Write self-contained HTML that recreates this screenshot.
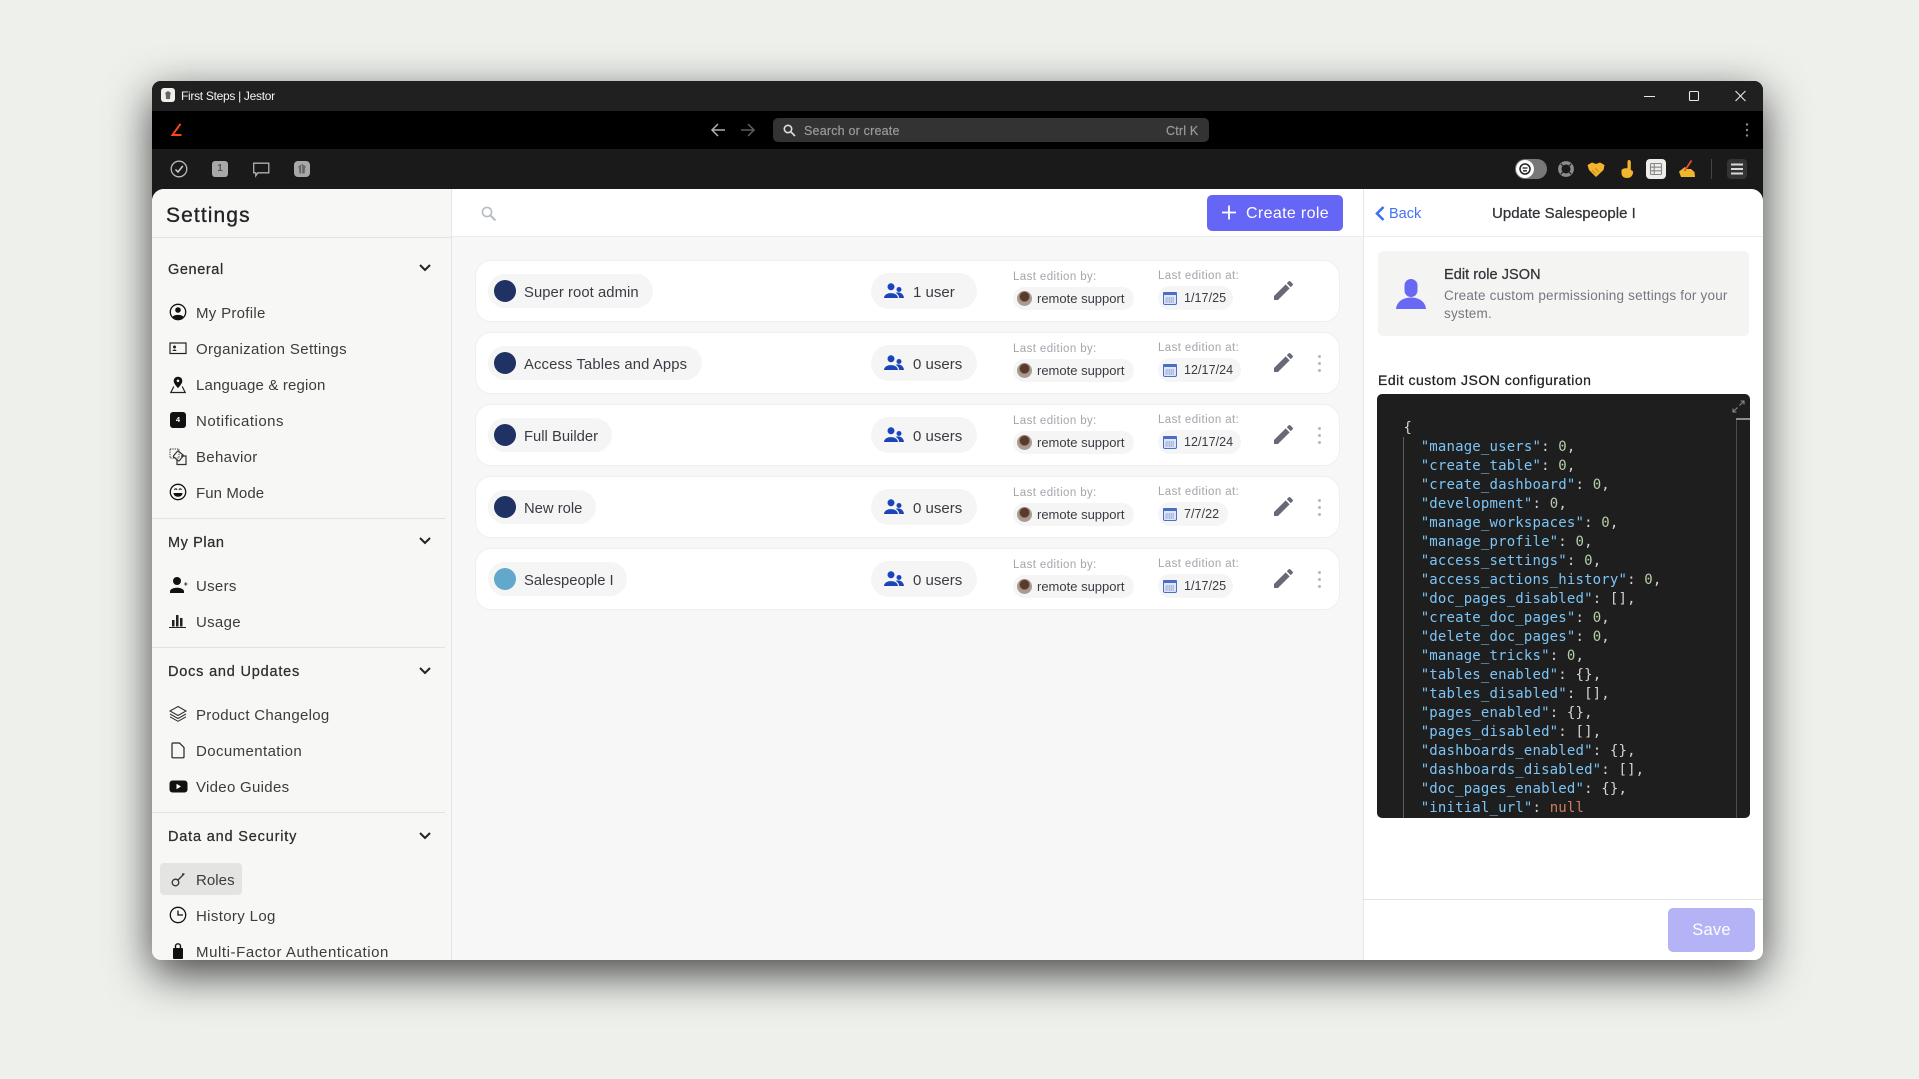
<!DOCTYPE html>
<html lang="en"><head><meta charset="utf-8"><title>First Steps | Jestor</title>
<style>
*{box-sizing:border-box}
html,body{margin:0;padding:0}
body{width:1919px;height:1079px;background:#eef0ec;overflow:hidden;position:relative;font-family:"Liberation Sans",Arial,sans-serif}
#win{position:absolute;left:152px;top:81px;width:1611px;height:879px;border-radius:9px;box-shadow:0 14px 44px rgba(0,0,0,.72);overflow:hidden;background:#1a1a1a}
#in{position:absolute;left:-152px;top:-81px;width:1919px;height:1079px}
.a{position:absolute}
.t{position:absolute;white-space:nowrap}
svg{position:absolute;overflow:visible}
.side{font-size:15px;letter-spacing:.3px;color:#3c3c3e;line-height:20px}
.head{font-size:14.5px;letter-spacing:.6px;color:#2e2e30;line-height:20px;-webkit-text-stroke:.25px #2e2e30}
.hr{position:absolute;left:152px;width:293px;height:1px;background:#e2e2e0}
.card{position:absolute;left:475px;width:865px;height:62px;background:#fff;border:1px solid #efefef;border-radius:16px}
.pill{position:absolute;background:#f5f5f6;border-radius:18px}
.nm{position:absolute;left:12px;top:13px;height:34px}
.dot{position:absolute;left:6px;top:6px;width:22px;height:22px;border-radius:50%;background:#1f3263}
.nt{position:absolute;left:36px;top:9px;font-size:14.8px;line-height:20px;color:#3b3b42;white-space:nowrap}
.up{left:395px;top:12px;width:106px;height:36px}
.ut{position:absolute;left:42px;top:10px;font-size:15px;line-height:20px;color:#3b3b42;white-space:nowrap}
.l1,.l2{position:absolute;font-size:11.5px;letter-spacing:.4px;color:#a4a4ac;line-height:14px;white-space:nowrap}
.l1{left:537px;top:9px}
.l2{left:682px;top:8px}
.bp{left:537px;top:26px;width:121px;height:23px}
.av{position:absolute;left:4px;top:4px;width:15px;height:15px;border-radius:50%;background:radial-gradient(circle at 50% 38%,#5b3a2c 0 36%,#a89b90 46% 100%)}
.bt{position:absolute;left:24px;top:3px;font-size:13px;line-height:17px;color:#3b3b42;white-space:nowrap}
.dp{left:682px;top:25px;height:24px}
.dt{position:absolute;left:26px;top:4px;font-size:12.5px;letter-spacing:.06px;line-height:17px;color:#3b3b42;white-space:nowrap}
.ds{position:absolute;left:842px;width:3px;height:3px;border-radius:50%;background:#b8b8b8}
#code{position:absolute;left:1403.5px;top:419px;font:14px/19px "DejaVu Sans Mono","Liberation Mono",monospace;letter-spacing:.17px;white-space:pre;color:#d4d4d4}
#code b{font-weight:400;color:#7cc4f5}
#code i{font-style:normal;color:#b5cea8}
#code u{text-decoration:none;color:#ce7f62}
</style></head>
<body>
<div id="win"><div id="in">
<!-- title bar -->
<div class="a" style="left:152px;top:81px;width:1611px;height:30px;background:#202020"></div>
<div class="a" style="left:161px;top:88px;width:14px;height:14px;border-radius:3px;background:#efefec"></div>
<svg style="left:161px;top:88px" width="14" height="14"><path d="M7 3 10 5 9.300 6.200 9 11H5L4.700 6.200 4 5Z" fill="#666"/></svg>
<div class="t" style="left:181px;top:88px;font-size:12px;letter-spacing:-.3px;line-height:16px;color:#f2f2f2">First Steps | Jestor</div>
<svg style="left:1640px;top:86px" width="115" height="20" fill="none" stroke="#e8e8e8" stroke-width="1.1"><path d="M4 10.5H15"/><rect x="49.5" y="5.5" width="9" height="9" rx="1"/><path d="M95.5 5 105.500 15M105.500 5 95.500 15"/></svg>
<!-- black bar -->
<div class="a" style="left:152px;top:111px;width:1611px;height:38px;background:#000"></div>
<svg style="left:171px;top:123px" width="11" height="14" fill="none" stroke="#f4481b" stroke-width="2"><path d="M9.500 .8 1.500 12H10.500"/></svg>
<svg style="left:710px;top:122px" width="48" height="16" fill="none" stroke-width="1.5"><path d="M15 8H2M8 2 2 8 8 14" stroke="#b0b0b0"/><path d="M31 8H44M38 2 44 8 38 14" stroke="#5e5e5e"/></svg>
<div class="a" style="left:773px;top:118px;width:436px;height:24px;background:#333;border-radius:5px"></div>
<svg style="left:783px;top:124px" width="13" height="13" fill="none" stroke="#ddd" stroke-width="1.600"><circle cx="5" cy="5" r="3.700"/><path d="M8 8 12 12"/></svg>
<div class="t" style="left:804px;top:123px;font-size:12.5px;letter-spacing:.2px;line-height:16px;color:#9a9a9a;-webkit-text-stroke:.2px #9a9a9a">Search or create</div>
<div class="t" style="left:1166px;top:123px;font-size:12.5px;letter-spacing:.2px;line-height:16px;color:#9a9a9a;-webkit-text-stroke:.2px #9a9a9a">Ctrl K</div>
<svg style="left:1745px;top:122px" width="4" height="16" fill="#8a8a8a"><circle cx="2" cy="2.500" r="1.200"/><circle cx="2" cy="8" r="1.200"/><circle cx="2" cy="13.500" r="1.200"/></svg>
<!-- toolbar -->
<svg style="left:170px;top:160px" width="18" height="18" fill="none" stroke="#b8b8b8" stroke-width="1.300"><circle cx="9" cy="9" r="7.800"/><path d="M5.500 9.500 8 12 12.800 6" stroke-width="1.500" stroke="#d0d0d0"/></svg>
<div class="a" style="left:212px;top:161px;width:16px;height:16px;border-radius:3px;background:#a8a8a8;color:#555;font-size:10px;font-weight:700;line-height:16px;text-align:center">1</div>
<svg style="left:253px;top:162px" width="17" height="16" fill="none" stroke="#b0b0b0" stroke-width="1.300"><path d="M.700 1.200H15.800V10.800H5L2.800 13.800V10.800H.700Z"/></svg>
<div class="a" style="left:294px;top:161px;width:16px;height:16px;border-radius:4px;background:#a8a8a8"></div>
<svg style="left:294px;top:161px" width="16" height="16"><path d="M8 3 12 5.600 11 7 10.600 12.500H5.400L5 7 4 5.600Z" fill="#666"/><path d="M7.700 4V12.500" stroke="#a8a8a8"/></svg>
<!-- right toolbar -->
<div class="a" style="left:1515px;top:159px;width:32px;height:20px;border-radius:10px;background:#787878"></div>
<div class="a" style="left:1516px;top:160px;width:18px;height:18px;border-radius:50%;background:#fff"></div>
<svg style="left:1515px;top:159px" width="20" height="20" fill="none" stroke="#222"><circle cx="10" cy="10" r="5" stroke-width="1.500"/><path d="M7.500 9H12.500M8 11.800H12" stroke-width="1.300"/></svg>
<svg style="left:1557px;top:160px" width="18" height="18" fill="none" stroke="#8c8c8c"><circle cx="9" cy="9" r="6.200" stroke-width="3.400"/><path d="M3.800 3.800 6.500 6.500M14.200 3.800 11.500 6.500M3.800 14.200 6.500 11.500M14.200 14.200 11.500 11.500" stroke="#1a1a1a" stroke-width="1.100"/></svg>
<svg style="left:1587px;top:161px" width="18" height="17"><path d="M.500 4 5 1.500 9 3 13 1.500 17.500 4 16.500 9 9 16 2 9Z" fill="#f3b52c"/><path d="M5 9 9 13M8 7 12 11" stroke="#c98d12"/></svg>
<svg style="left:1620px;top:159px" width="14" height="20"><path d="M9 1C10 1 10.800 1.800 10.800 3V11C12.500 11.500 13.500 12.500 13 14 12.500 17 10.500 19 7 19 3.500 19 1.500 17 1.500 14V11.500C1.500 10 4 9 7.500 9.300V3C7.500 1.800 8 1 9 1Z" fill="#f3b52c"/></svg>
<div class="a" style="left:1646px;top:159px;width:20px;height:20px;border-radius:4px;background:#ededeb"></div>
<svg style="left:1646px;top:159px" width="20" height="20" fill="none" stroke="#888" stroke-width="1.100"><rect x="4.500" y="4.500" width="11" height="11" rx="1"/><path d="M4.500 8.200H15.500M4.500 11.800H15.500M8.200 4.500V15.500"/></svg>
<svg style="left:1678px;top:159px" width="19" height="20"><path d="M1 12.500 7 8 9 10 13 10 16.500 13 17 18H3Z" fill="#f3b52c"/><path d="M6.500 12 13.500 1.500" stroke="#e0523a" stroke-width="1.800"/></svg>
<div class="a" style="left:1711px;top:159px;width:1px;height:20px;background:#454545"></div>
<div class="a" style="left:1727px;top:159px;width:20px;height:20px;border-radius:4px;background:#343434"></div>
<svg style="left:1727px;top:159px" width="20" height="20" stroke="#d8d8d8" stroke-width="2"><path d="M4 5.500H16M4 10H16M4 14.500H16"/></svg>

<!-- content -->
<div class="a" style="left:152px;top:189px;width:1611px;height:771px;border-radius:12px 12px 0 0;background:#f7f7f7;overflow:hidden">
<div class="a" style="left:-152px;top:-189px;width:1919px;height:1079px">
<!-- sidebar -->
<div class="a" style="left:152px;top:189px;width:300px;height:771px;background:#f7f7f5;border-right:1px solid #e4e4e2"></div>
<div class="a" style="left:152px;top:237px;width:299px;height:1px;background:#e2e2e0"></div>
<div class="t" style="left:166px;top:203px;font-size:21px;letter-spacing:1.1px;line-height:26px;color:#232325;-webkit-text-stroke:.35px #232325">Settings</div>

<div class="t head" style="left:168px;top:260px">General</div>
<div class="t head" style="left:168px;top:533px">My Plan</div>
<div class="t head" style="left:168px;top:662px;letter-spacing:.8px">Docs and Updates</div>
<div class="t head" style="left:168px;top:827px;letter-spacing:.82px">Data and Security</div>
<svg style="left:419px;top:264px" width="12" height="8" fill="none" stroke="#222" stroke-width="2"><path d="M1 1 6 6 11 1"/></svg>
<svg style="left:419px;top:537px" width="12" height="8" fill="none" stroke="#222" stroke-width="2"><path d="M1 1 6 6 11 1"/></svg>
<svg style="left:419px;top:667px" width="12" height="8" fill="none" stroke="#222" stroke-width="2"><path d="M1 1 6 6 11 1"/></svg>
<svg style="left:419px;top:832px" width="12" height="8" fill="none" stroke="#222" stroke-width="2"><path d="M1 1 6 6 11 1"/></svg>
<div class="hr" style="top:518px"></div><div class="hr" style="top:647px"></div><div class="hr" style="top:812px"></div>
<div class="a" style="left:160px;top:863px;width:82px;height:32px;border-radius:4px;background:#e4e4e2"></div>

<div class="t side" style="left:196px;top:304px">My Profile</div>
<div class="t side" style="left:196px;top:340px;letter-spacing:.36px">Organization Settings</div>
<div class="t side" style="left:196px;top:376px;letter-spacing:.16px">Language &amp; region</div>
<div class="t side" style="left:196px;top:412px;letter-spacing:.48px">Notifications</div>
<div class="t side" style="left:196px;top:448px">Behavior</div>
<div class="t side" style="left:196px;top:484px;letter-spacing:.08px">Fun Mode</div>
<div class="t side" style="left:196px;top:576.5px">Users</div>
<div class="t side" style="left:196px;top:612.5px">Usage</div>
<div class="t side" style="left:196px;top:705.5px">Product Changelog</div>
<div class="t side" style="left:196px;top:742px;letter-spacing:.4px">Documentation</div>
<div class="t side" style="left:196px;top:778px">Video Guides</div>
<div class="t side" style="left:196px;top:870.5px;letter-spacing:.06px">Roles</div>
<div class="t side" style="left:196px;top:907px;letter-spacing:.35px">History Log</div>
<div class="t side" style="left:196px;top:943px;letter-spacing:.57px">Multi-Factor Authentication</div>

<svg style="left:169px;top:303px" width="18" height="18"><circle cx="9" cy="9" r="7.700" fill="none" stroke="#111" stroke-width="1.300"/><circle cx="9" cy="7" r="2.800" fill="#111"/><path d="M3.500 14C5 11.200 13 11.200 14.500 14 12 17.200 6 17.200 3.500 14Z" fill="#111"/></svg>
<svg style="left:169px;top:342px" width="18" height="13"><rect x="1" y="1" width="16" height="10.500" fill="none" stroke="#222" stroke-width="1.200"/><circle cx="5.500" cy="5" r="1.500" fill="#222"/><path d="M3.500 9C3.500 7 7.500 7 7.500 9Z" fill="#222"/></svg>
<svg style="left:170px;top:376px" width="16" height="18"><path d="M8 .8C5.300.8 3.700 2.800 3.700 5 3.700 8 8 12 8 12S12.300 8 12.300 5C12.300 2.800 10.700.8 8 .8Z" fill="#111"/><circle cx="8" cy="4.800" r="1.300" fill="#f7f7f5"/><path d="M3.800 10.500 .8 16.500H15.200L12.200 10.500" fill="none" stroke="#222" stroke-width="1.200"/></svg>
<div class="a" style="left:170px;top:412px;width:16px;height:16px;border-radius:3px;background:#111;color:#fff;font-size:7.500px;font-weight:700;line-height:16px;text-align:center">4</div>
<svg style="left:169px;top:448px" width="18" height="18" fill="none" stroke="#333" stroke-width="1"><rect x="1" y="1" width="9" height="9" stroke-dasharray="1.300 1"/><rect x="5.500" y="4" width="7.500" height="7.500" rx="1" transform="rotate(40 9 8)" stroke-width="1.200"/><path d="M12 8H17V16.500H8V12" stroke-width="1.200"/></svg>
<svg style="left:169px;top:483px" width="18" height="18"><circle cx="9" cy="9" r="7.700" fill="none" stroke="#111" stroke-width="1.300"/><path d="M4.500 10H13.500C13.500 15 4.500 15 4.500 10Z" fill="#111"/><path d="M5.500 6.800C6 5.500 7.500 5.500 8 6.800M10 6.800C10.500 5.500 12 5.500 12.500 6.800" stroke="#111" fill="none" stroke-width="1.200"/></svg>
<svg style="left:169px;top:576px" width="19" height="18" fill="#111"><circle cx="8" cy="5" r="4"/><path d="M1 15.500C1 10.500 15 10.500 15 15.500V17H1Z"/><path d="M15 8H18.500M16.800 6.300V9.700" stroke="#111" stroke-width=".8"/></svg>
<svg style="left:169px;top:613px" width="18" height="16" fill="#222"><rect x="3" y="7" width="2.500" height="6.500"/><rect x="7" y="2" width="2.500" height="11.500"/><rect x="11" y="5" width="2.500" height="8.500"/><rect x="0" y="14" width="17" height="1"/></svg>
<svg style="left:169px;top:705px" width="18" height="18" fill="none" stroke="#333" stroke-width="1.100"><path d="M9 1.500 17 6 9 10.500 1 6Z"/><path d="M1 9 9 13.500 17 9M1 11.800 9 16.300 17 11.800"/></svg>
<svg style="left:171px;top:742px" width="14" height="17" fill="none" stroke="#222" stroke-width="1.200"><path d="M1 2C1 1.400 1.400 1 2 1H8.500L13 5.500V14.800C13 15.400 12.600 15.800 12 15.800H2C1.400 15.800 1 15.400 1 14.800Z"/></svg>
<svg style="left:169px;top:780px" width="19" height="13"><rect x=".5" y=".5" width="18" height="12" rx="3" fill="#111"/><path d="M7.500 3.800 12 6.500 7.500 9.200Z" fill="#fff"/></svg>
<svg style="left:170px;top:871px" width="16" height="17" fill="none" stroke="#333" stroke-width="1.300"><circle cx="5.500" cy="11.500" r="3.300"/><path d="M8 9 14 3M12 3H14.500"/></svg>
<svg style="left:169px;top:906px" width="18" height="18" fill="none" stroke="#111" stroke-width="1.300"><circle cx="9" cy="9" r="7.700"/><path d="M9 4.500V9H14"/></svg>
<svg style="left:172px;top:942px" width="12" height="18"><path d="M3.500 6V4.200C3.500 1 8.500 1 8.500 4.200V6" fill="none" stroke="#111" stroke-width="1.400"/><rect x="1" y="6" width="10" height="11" rx="1" fill="#111"/></svg>

<!-- main header -->
<div class="a" style="left:452px;top:189px;width:912px;height:48px;background:#fff;border-bottom:1px solid #ececec"></div>
<svg style="left:481px;top:206px" width="16" height="16" fill="none" stroke="#b8bcc4" stroke-width="1.600"><circle cx="6" cy="6" r="4.600"/><path d="M9.500 9.500 14.500 14.500" stroke-width="2"/></svg>
<div class="a" style="left:1207px;top:195px;width:136px;height:36px;border-radius:5px;background:#6565f6"></div>
<svg style="left:1221px;top:205px" width="16" height="15" stroke="#fff" stroke-width="1.800"><path d="M8 .5V14.500M1 7.500H15"/></svg>
<div class="t" style="left:1246px;top:204px;font-size:16px;letter-spacing:.35px;line-height:20px;color:#fff">Create role</div>

<!-- cards -->
<div class="card" style="top:260px">
 <div class="pill nm" style="width:165px"><div class="dot"></div><div class="nt" style="letter-spacing:.07px">Super root admin</div></div>
 <div class="pill up"><svg style="left:13px;top:10px" width="20" height="15" fill="#1a44b8"><circle cx="7" cy="3.800" r="3.500"/><circle cx="15" cy="6.500" r="2.500"/><path d="M0 15C.5 8.500 13.500 8.500 14 15ZM11.500 9.800C15 8.500 19.500 10 20 15H15.200C15 12.800 13.800 11 11.500 9.800Z"/></svg><div class="ut">1 user</div></div>
 <div class="l1">Last edition by:</div>
 <div class="pill bp"><div class="av"></div><div class="bt">remote support</div></div>
 <div class="l2">Last edition at:</div>
 <div class="pill dp" style="width:75px"><svg style="left:5px;top:6px" width="14" height="13"><rect x=".5" y=".5" width="13" height="12" rx="1.500" fill="#dfe6f8" stroke="#4a6dc6"/><rect x="0" y="0" width="14" height="3" rx="1" fill="#4a6dc6"/><path d="M2.500 6H11.500M2.500 8H11.500M2.500 10H11.500" stroke="#6c88d0" stroke-width=".9" stroke-dasharray="1.200 .6"/></svg><div class="dt">1/17/25</div></div>
 <svg style="left:798px;top:20px" width="19" height="19" viewBox="3 3 18 18" fill="#666a76"><path d="M3 17.250V21h3.750L17.810 9.940l-3.750-3.750L3 17.250zM20.710 7.040c.39-.39.39-1.020 0-1.410l-2.340-2.340c-.39-.39-1.020-.39-1.410 0l-1.830 1.830 3.750 3.750 1.830-1.830z"/></svg>
</div>

<div class="card" style="top:332px">
 <div class="pill nm" style="width:214px"><div class="dot"></div><div class="nt" style="letter-spacing:.14px">Access Tables and Apps</div></div>
 <div class="pill up"><svg style="left:13px;top:10px" width="20" height="15" fill="#1a44b8"><circle cx="7" cy="3.800" r="3.500"/><circle cx="15" cy="6.500" r="2.500"/><path d="M0 15C.5 8.500 13.500 8.500 14 15ZM11.500 9.800C15 8.500 19.500 10 20 15H15.200C15 12.800 13.800 11 11.500 9.800Z"/></svg><div class="ut">0 users</div></div>
 <div class="l1">Last edition by:</div>
 <div class="pill bp"><div class="av"></div><div class="bt">remote support</div></div>
 <div class="l2">Last edition at:</div>
 <div class="pill dp" style="width:83px"><svg style="left:5px;top:6px" width="14" height="13"><rect x=".5" y=".5" width="13" height="12" rx="1.500" fill="#dfe6f8" stroke="#4a6dc6"/><rect x="0" y="0" width="14" height="3" rx="1" fill="#4a6dc6"/><path d="M2.500 6H11.500M2.500 8H11.500M2.500 10H11.500" stroke="#6c88d0" stroke-width=".9" stroke-dasharray="1.200 .6"/></svg><div class="dt">12/17/24</div></div>
 <svg style="left:798px;top:20px" width="19" height="19" viewBox="3 3 18 18" fill="#666a76"><path d="M3 17.250V21h3.750L17.810 9.940l-3.750-3.750L3 17.250zM20.710 7.040c.39-.39.39-1.020 0-1.410l-2.340-2.340c-.39-.39-1.020-.39-1.410 0l-1.830 1.830 3.750 3.750 1.830-1.830z"/></svg>
 <div class="ds" style="top:22px"></div><div class="ds" style="top:29px"></div><div class="ds" style="top:36px"></div>
</div>

<div class="card" style="top:404px">
 <div class="pill nm" style="width:124px"><div class="dot"></div><div class="nt">Full Builder</div></div>
 <div class="pill up"><svg style="left:13px;top:10px" width="20" height="15" fill="#1a44b8"><circle cx="7" cy="3.800" r="3.500"/><circle cx="15" cy="6.500" r="2.500"/><path d="M0 15C.5 8.500 13.500 8.500 14 15ZM11.500 9.800C15 8.500 19.500 10 20 15H15.200C15 12.800 13.800 11 11.500 9.800Z"/></svg><div class="ut">0 users</div></div>
 <div class="l1">Last edition by:</div>
 <div class="pill bp"><div class="av"></div><div class="bt">remote support</div></div>
 <div class="l2">Last edition at:</div>
 <div class="pill dp" style="width:83px"><svg style="left:5px;top:6px" width="14" height="13"><rect x=".5" y=".5" width="13" height="12" rx="1.500" fill="#dfe6f8" stroke="#4a6dc6"/><rect x="0" y="0" width="14" height="3" rx="1" fill="#4a6dc6"/><path d="M2.500 6H11.500M2.500 8H11.500M2.500 10H11.500" stroke="#6c88d0" stroke-width=".9" stroke-dasharray="1.200 .6"/></svg><div class="dt">12/17/24</div></div>
 <svg style="left:798px;top:20px" width="19" height="19" viewBox="3 3 18 18" fill="#666a76"><path d="M3 17.250V21h3.750L17.810 9.940l-3.750-3.750L3 17.250zM20.710 7.040c.39-.39.39-1.020 0-1.410l-2.340-2.340c-.39-.39-1.020-.39-1.410 0l-1.830 1.830 3.750 3.750 1.830-1.830z"/></svg>
 <div class="ds" style="top:22px"></div><div class="ds" style="top:29px"></div><div class="ds" style="top:36px"></div>
</div>

<div class="card" style="top:476px">
 <div class="pill nm" style="width:108px"><div class="dot"></div><div class="nt">New role</div></div>
 <div class="pill up"><svg style="left:13px;top:10px" width="20" height="15" fill="#1a44b8"><circle cx="7" cy="3.800" r="3.500"/><circle cx="15" cy="6.500" r="2.500"/><path d="M0 15C.5 8.500 13.500 8.500 14 15ZM11.500 9.800C15 8.500 19.500 10 20 15H15.200C15 12.800 13.800 11 11.500 9.800Z"/></svg><div class="ut">0 users</div></div>
 <div class="l1">Last edition by:</div>
 <div class="pill bp"><div class="av"></div><div class="bt">remote support</div></div>
 <div class="l2">Last edition at:</div>
 <div class="pill dp" style="width:70px"><svg style="left:5px;top:6px" width="14" height="13"><rect x=".5" y=".5" width="13" height="12" rx="1.500" fill="#dfe6f8" stroke="#4a6dc6"/><rect x="0" y="0" width="14" height="3" rx="1" fill="#4a6dc6"/><path d="M2.500 6H11.500M2.500 8H11.500M2.500 10H11.500" stroke="#6c88d0" stroke-width=".9" stroke-dasharray="1.200 .6"/></svg><div class="dt">7/7/22</div></div>
 <svg style="left:798px;top:20px" width="19" height="19" viewBox="3 3 18 18" fill="#666a76"><path d="M3 17.250V21h3.750L17.810 9.940l-3.750-3.750L3 17.250zM20.710 7.040c.39-.39.39-1.020 0-1.410l-2.340-2.340c-.39-.39-1.020-.39-1.410 0l-1.830 1.830 3.750 3.750 1.830-1.830z"/></svg>
 <div class="ds" style="top:22px"></div><div class="ds" style="top:29px"></div><div class="ds" style="top:36px"></div>
</div>

<div class="card" style="top:548px">
 <div class="pill nm" style="width:139px"><div class="dot" style="background:#62a8cb"></div><div class="nt">Salespeople I</div></div>
 <div class="pill up"><svg style="left:13px;top:10px" width="20" height="15" fill="#1a44b8"><circle cx="7" cy="3.800" r="3.500"/><circle cx="15" cy="6.500" r="2.500"/><path d="M0 15C.5 8.500 13.500 8.500 14 15ZM11.500 9.800C15 8.500 19.500 10 20 15H15.200C15 12.800 13.800 11 11.500 9.800Z"/></svg><div class="ut">0 users</div></div>
 <div class="l1">Last edition by:</div>
 <div class="pill bp"><div class="av"></div><div class="bt">remote support</div></div>
 <div class="l2">Last edition at:</div>
 <div class="pill dp" style="width:75px"><svg style="left:5px;top:6px" width="14" height="13"><rect x=".5" y=".5" width="13" height="12" rx="1.500" fill="#dfe6f8" stroke="#4a6dc6"/><rect x="0" y="0" width="14" height="3" rx="1" fill="#4a6dc6"/><path d="M2.500 6H11.500M2.500 8H11.500M2.500 10H11.500" stroke="#6c88d0" stroke-width=".9" stroke-dasharray="1.200 .6"/></svg><div class="dt">1/17/25</div></div>
 <svg style="left:798px;top:20px" width="19" height="19" viewBox="3 3 18 18" fill="#666a76"><path d="M3 17.250V21h3.750L17.810 9.940l-3.750-3.750L3 17.250zM20.710 7.040c.39-.39.39-1.020 0-1.410l-2.340-2.340c-.39-.39-1.020-.39-1.410 0l-1.830 1.830 3.750 3.750 1.830-1.830z"/></svg>
 <div class="ds" style="top:22px"></div><div class="ds" style="top:29px"></div><div class="ds" style="top:36px"></div>
</div>

<!-- right panel -->
<div class="a" style="left:1363px;top:189px;width:400px;height:771px;background:#fff;border-left:1px solid #e6e6e6"></div>
<div class="a" style="left:1363px;top:236px;width:400px;height:1px;background:#ececec"></div>
<svg style="left:1375px;top:206px" width="10" height="15" fill="none" stroke="#3f6ff5" stroke-width="2.600"><path d="M8.500 1 2 7.500 8.500 14"/></svg>
<div class="t" style="left:1389px;top:204px;font-size:14.5px;line-height:20px;color:#4272f4">Back</div>
<div class="t" style="left:1492px;top:204px;font-size:15px;letter-spacing:.02px;line-height:20px;color:#333338;-webkit-text-stroke:.25px #333338">Update Salespeople I</div>

<div class="a" style="left:1378px;top:251px;width:371px;height:85px;border-radius:5px;background:#f4f4f2"></div>
<svg style="left:1396px;top:279px" width="30" height="30" fill="#6868f5"><rect x="8.500" y="0" width="13" height="18" rx="6.500"/><path d="M0 30C1 21 9 18.500 15 18.500S29 21 30 30Z"/></svg>
<div class="t" style="left:1444px;top:265px;font-size:14.5px;letter-spacing:.05px;line-height:20px;color:#333338;-webkit-text-stroke:.25px #333338">Edit role JSON</div>
<div class="t" style="left:1444px;top:286px;font-size:13.5px;letter-spacing:.2px;line-height:20px;color:#777782">Create custom permissioning settings for your</div>
<div class="t" style="left:1444px;top:304px;font-size:13.5px;letter-spacing:.2px;line-height:20px;color:#777782">system.</div>
<div class="t" style="left:1378px;top:370px;font-size:14px;letter-spacing:.5px;line-height:20px;color:#1f1f22;-webkit-text-stroke:.25px #1f1f22">Edit custom JSON configuration</div>

<div class="a" style="left:1377px;top:394px;width:373px;height:424px;border-radius:5px;background:#1e1e1e;overflow:hidden"></div>
<svg style="left:1732px;top:400px" width="13" height="13" fill="none" stroke="#8a8a8a" stroke-width="1.100"><path d="M7.500 5.500 12 1M8.500 1H12V4.500M5.500 7.500 1 12M1 8.500V12H4.500"/></svg>
<div class="a" style="left:1736px;top:418px;width:1px;height:400px;background:#4d4d4d"></div>
<div class="a" style="left:1736px;top:418px;width:14px;height:2px;background:#8c8c8c"></div>
<div class="a" style="left:1403px;top:437px;width:1px;height:381px;background:#5c5c5c"></div>
<div id="code">{
  <b>"manage_users"</b>: <i>0</i>,
  <b>"create_table"</b>: <i>0</i>,
  <b>"create_dashboard"</b>: <i>0</i>,
  <b>"development"</b>: <i>0</i>,
  <b>"manage_workspaces"</b>: <i>0</i>,
  <b>"manage_profile"</b>: <i>0</i>,
  <b>"access_settings"</b>: <i>0</i>,
  <b>"access_actions_history"</b>: <i>0</i>,
  <b>"doc_pages_disabled"</b>: [],
  <b>"create_doc_pages"</b>: <i>0</i>,
  <b>"delete_doc_pages"</b>: <i>0</i>,
  <b>"manage_tricks"</b>: <i>0</i>,
  <b>"tables_enabled"</b>: {},
  <b>"tables_disabled"</b>: [],
  <b>"pages_enabled"</b>: {},
  <b>"pages_disabled"</b>: [],
  <b>"dashboards_enabled"</b>: {},
  <b>"dashboards_disabled"</b>: [],
  <b>"doc_pages_enabled"</b>: {},
  <b>"initial_url"</b>: <u>null</u></div>

<div class="a" style="left:1363px;top:899px;width:400px;height:1px;background:#e4e4e4"></div>
<div class="a" style="left:1668px;top:908px;width:87px;height:44px;border-radius:5px;background:#b3b3f6;color:#fff;font-size:16.5px;letter-spacing:.25px;line-height:44px;text-align:center">Save</div>
</div></div>
</div></div>
</body></html>
